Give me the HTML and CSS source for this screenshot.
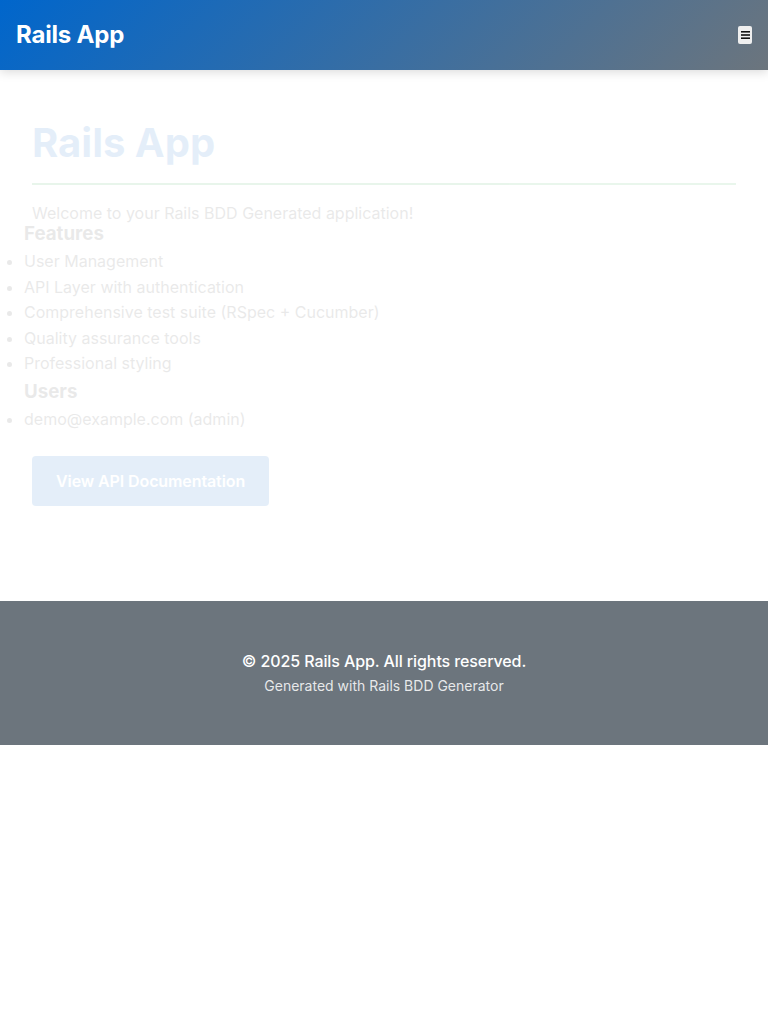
FILE: index.html
```html
<!DOCTYPE html>
<html lang="en">
<head>
<meta charset="utf-8">
<title>Rails App</title>
<link rel="stylesheet" href="styles.css">
</head>
<body>
<header class="navbar">
  <div class="brand">Rails App</div>
  <button class="menu-toggle" aria-label="Menu">
    <svg width="9" height="8" viewBox="0 0 9 8"><rect x="0" y="0" width="9" height="1.6" fill="#111"/><rect x="0" y="3.2" width="9" height="1.6" fill="#111"/><rect x="0" y="6.4" width="9" height="1.6" fill="#111"/></svg>
  </button>
</header>
<main class="main">
  <div class="hero">
    <h1 class="hero-title">Rails App</h1>
    <p class="hero-lead">Welcome to your Rails BDD Generated application!</p>
  </div>
  <section class="section">
    <h3 class="section-title">Features</h3>
    <ul class="list list-features">
      <li>User Management</li>
      <li>API Layer with authentication</li>
      <li>Comprehensive test suite (RSpec + Cucumber)</li>
      <li>Quality assurance tools</li>
      <li>Professional styling</li>
    </ul>
    <h3 class="section-title">Users</h3>
    <ul class="list list-users">
      <li>demo@example.com (admin)</li>
    </ul>
  </section>
  <div class="actions">
    <a class="btn" href="#">View API Documentation</a>
  </div>
</main>
<footer class="footer">
  <p class="footer-main">© 2025 Rails App. All rights reserved.</p>
  <p class="footer-sub">Generated with Rails BDD Generator</p>
</footer>
</body>
</html>
```
FILE: styles.css
```css
* { box-sizing: border-box; }
html, body { margin: 0; padding: 0; background: #fff; }
body {
  font-family: Inter, "Noto Sans", "Liberation Sans", sans-serif;
  color: #333;
  font-size: 16px;
  line-height: 1.6;
}
.navbar {
  height: 70px;
  display: flex;
  align-items: center;
  justify-content: space-between;
  padding: 0 16px;
  background: linear-gradient(135deg, #0066cc 0%, #6c757d 100%);
  box-shadow: 0 2px 10px rgba(0,0,0,0.15);
  position: relative;
  z-index: 1;
}
.brand {
  color: #fff;
  font-weight: 700;
  font-size: 24px;
  line-height: 1.2;
  letter-spacing: -0.2px;
}
.menu-toggle {
  width: 14px;
  height: 18px;
  padding: 0;
  border: none;
  border-radius: 2px;
  background: #efefef;
  display: flex;
  align-items: center;
  justify-content: center;
}
.menu-toggle svg { display: block; }
.main {
  opacity: 0.1;
  padding-bottom: 95px;
}
.hero { padding: 49px 32px 0; }
.hero-title {
  margin: 0;
  font-size: 40px;
  line-height: 48px;
  font-weight: 700;
  color: #0066cc;
  padding-bottom: 16px;
  border-bottom: 2px solid #28a745;
}
.hero-lead {
  margin: 18px 0 0;
  line-height: 20px;
}
.section { padding-left: 24px; padding-top: 1px; }
.section-title {
  margin: 0;
  font-size: 18.72px;
  line-height: 19px;
  font-weight: 700;
  color: #333;
}
.list { padding-left: 0; }
.list-features { margin: 6px 0 5px; }
.list-users { margin: 6px 0 0; }
.list li { line-height: 25.6px; }
.actions { padding: 23px 32px 0; }
.btn {
  display: inline-block;
  background: #0066cc;
  color: #fff;
  font-weight: 600;
  text-decoration: none;
  padding: 15px 24px;
  line-height: 20px;
  border-radius: 4px;
  letter-spacing: -0.1px;
}
.footer {
  background: #6c757d;
  color: #fff;
  text-align: center;
  padding: 48px 16px 47px;
}
.footer-main {
  margin: 0;
  font-weight: 500;
  line-height: 25.6px;
  letter-spacing: -0.1px;
}
.footer-sub {
  margin: 1px 0 0;
  font-size: 14px;
  line-height: 22.4px;
  color: rgba(255,255,255,0.85);
}
```
